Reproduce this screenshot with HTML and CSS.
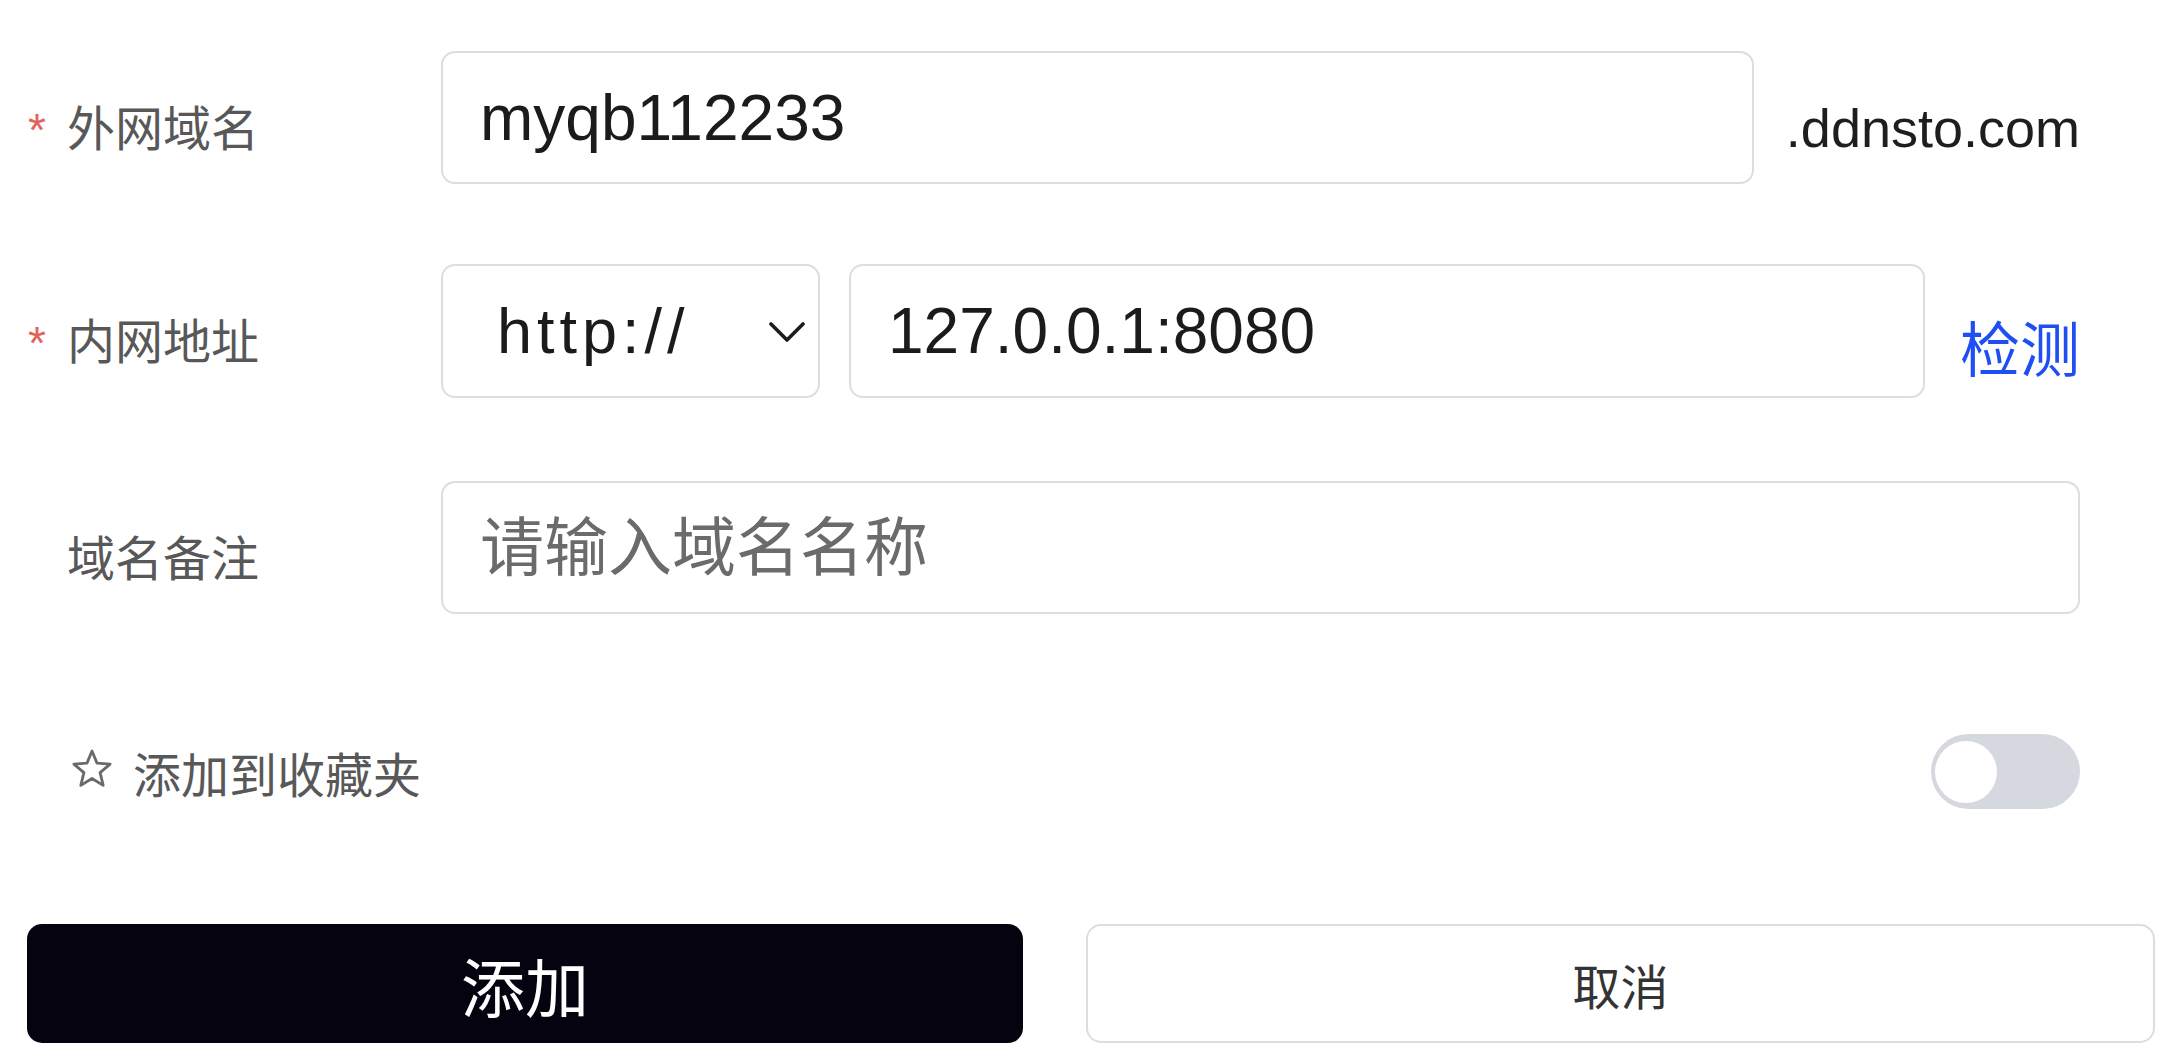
FILE: index.html
```html
<!DOCTYPE html>
<html lang="zh-CN">
<head>
<meta charset="utf-8">
<title>添加域名</title>
<link rel="stylesheet" href="styles.css">
</head>
<body>
<div class="page">
  <div class="form">
    <div class="row row-domain">
      <div class="label"><span class="req">*</span><span class="label-text">外网域名</span></div>
      <div class="control">
        <input class="field field-grow" type="text" value="myqb112233">
        <span class="suffix">.ddnsto.com</span>
      </div>
    </div>

    <div class="row row-addr">
      <div class="label"><span class="req">*</span><span class="label-text">内网地址</span></div>
      <div class="control control-addr">
        <div class="select">
          <span class="select-text">http://</span>
          <svg class="chevron" width="36" height="22" viewBox="0 0 36 22" aria-hidden="true">
            <polyline points="2,3 18,19 34,3" fill="none" stroke="#1c1c1c" stroke-width="3.6" stroke-linecap="round" stroke-linejoin="round"/>
          </svg>
        </div>
        <input class="field field-grow" type="text" value="127.0.0.1:8080">
        <span class="check">检测</span>
      </div>
    </div>

    <div class="row row-note">
      <div class="label"><span class="req"></span><span class="label-text">域名备注</span></div>
      <div class="control">
        <input class="field field-grow" type="text" placeholder="请输入域名名称">
      </div>
    </div>

    <div class="fav">
      <div class="fav-label">
        <svg class="star" width="40" height="42" viewBox="0 0 40 40" aria-hidden="true">
          <polygon points="20,3 25,15.1 38.1,16.1 28.1,24.6 31.2,37.4 20,30.5 8.8,37.4 11.9,24.6 1.9,16.1 15,15.1" fill="none" stroke="#6a6a6a" stroke-width="2.8" stroke-linejoin="round"/>
        </svg>
        <span class="fav-text">添加到收藏夹</span>
      </div>
      <div class="toggle"><span class="knob"></span></div>
    </div>
  </div>

  <div class="actions">
    <div class="btn btn-primary">添加</div>
    <div class="btn btn-ghost">取消</div>
  </div>
</div>
</body>
</html>
```

FILE: styles.css
```css
* {
  box-sizing: border-box;
}

body {
  margin: 0;
  background: #ffffff;
  font-family: "Liberation Sans", "Noto Sans CJK SC", sans-serif;
}

.page {
  width: 2168px;
  padding: 51px 0 0 28px;
}

.form {
  width: 2052px;
}

.row {
  display: grid;
  grid-template-columns: 413px 1fr;
  align-items: center;
  height: 133px;
}

.row-addr {
  margin-top: 80px;
  height: 134px;
}

.row-note {
  margin-top: 83px;
}

.label {
  display: flex;
  align-items: baseline;
  padding-top: 14px;
  font-family: "Noto Sans CJK SC", sans-serif;
  font-size: 48px;
  color: #585858;
}

.req {
  width: 39px;
  flex: none;
  font-family: "Liberation Sans", sans-serif;
  font-size: 46px;
  color: #e0645a;
}

.label-text {
  white-space: nowrap;
}

.control {
  display: flex;
  align-items: center;
  height: 100%;
}

.control-addr {
  gap: 0;
}

.field {
  height: 100%;
  min-width: 0;
  border: 2px solid #dcdde4;
  border-radius: 14px;
  padding: 0 37px;
  background: #ffffff;
  font-family: "Liberation Sans", "Noto Sans CJK SC", sans-serif;
  font-size: 64px;
  color: #1b1b1b;
  outline: none;
}

.field::placeholder {
  font-family: "Noto Sans CJK SC", sans-serif;
  color: #6b6b6b;
}

.field-grow {
  flex: 1;
}

.suffix {
  margin-left: 32px;
  padding-top: 20px;
  font-size: 54px;
  color: #1e1e1e;
  white-space: nowrap;
}

.select {
  width: 379px;
  height: 100%;
  flex: none;
  display: flex;
  align-items: center;
  justify-content: space-between;
  margin-right: 29px;
  padding: 0 13px 0 54px;
  border: 2px solid #dcdde4;
  border-radius: 14px;
  background: #ffffff;
}

.select-text {
  font-size: 63px;
  letter-spacing: 5px;
  color: #1b1b1b;
}

.chevron {
  display: block;
  margin-top: 2px;
}

.check {
  margin-left: 35px;
  padding-top: 28px;
  font-family: "Noto Sans CJK SC", sans-serif;
  font-size: 60px;
  color: #1f4ff2;
  white-space: nowrap;
}

.fav {
  display: flex;
  align-items: center;
  justify-content: space-between;
  height: 75px;
  margin-top: 120px;
  padding-left: 44px;
}

.fav-label {
  display: flex;
  align-items: center;
  gap: 21px;
}

.star {
  display: block;
  margin-top: -8px;
}

.fav-text {
  font-family: "Noto Sans CJK SC", sans-serif;
  font-size: 48px;
  color: #585858;
}

.toggle {
  width: 149px;
  height: 75px;
  display: flex;
  align-items: center;
  padding: 0 4px;
  border-radius: 38px;
  background: #d6d8df;
}

.knob {
  width: 62px;
  height: 62px;
  border-radius: 50%;
  background: #ffffff;
}

.actions {
  display: grid;
  grid-template-columns: 996px 1069px;
  column-gap: 63px;
  margin-top: 115px;
  margin-left: -1px;
}

.btn {
  height: 119px;
  display: flex;
  align-items: center;
  justify-content: center;
  border-radius: 15px;
  font-family: "Noto Sans CJK SC", sans-serif;
}

.btn-primary {
  background: #05030f;
  color: #ffffff;
  font-size: 64px;
}

.btn-ghost {
  background: #ffffff;
  border: 2px solid #dcdde4;
  color: #333333;
  font-size: 48px;
}
```
